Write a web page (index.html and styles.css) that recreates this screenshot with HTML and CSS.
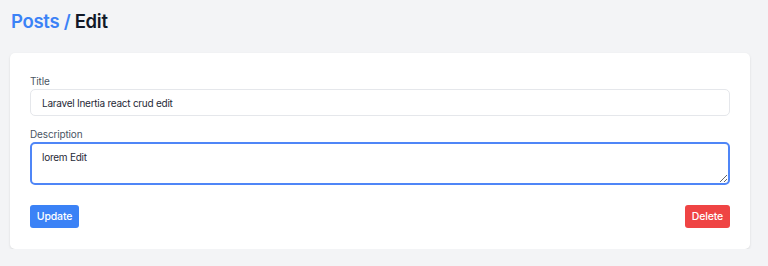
FILE: index.html
```html
<!DOCTYPE html>
<html lang="en">
<head>
<meta charset="utf-8">
<title>Posts / Edit</title>
<link rel="stylesheet" href="styles.css">
</head>
<body>
<h1 class="page-title"><span class="crumb">Posts</span> <span class="crumb">/</span> Edit</h1>
<div class="card">
  <form class="form">
    <div class="field">
      <label class="label" for="title">Title</label>
      <input class="input" id="title" type="text" value="Laravel Inertia react crud edit">
    </div>
    <div class="field">
      <label class="label" for="desc">Description</label>
      <textarea class="textarea focus" id="desc">lorem Edit</textarea>
    </div>
    <div class="actions">
      <button type="button" class="btn btn-blue">Update</button>
      <button type="button" class="btn btn-red">Delete</button>
    </div>
  </form>
</div>
</body>
</html>
```
FILE: styles.css
```css
* { box-sizing: border-box; }
html, body { margin: 0; padding: 0; }
body {
  background: #f3f4f6;
  font-family: Inter, "Noto Sans", sans-serif;
  color: #111827;
  padding: 0 18px 0 10px;
}
.page-title {
  margin: 0;
  padding: 9px 1px 0;
  height: 53px;
  font-size: 18.5px;
  font-weight: 600;
  letter-spacing: -0.3px;
  line-height: 24px;
  color: #111827;
}
.crumb { color: #3b82f6; }
.card {
  background: #fff;
  border-radius: 5px;
  box-shadow: 0 1px 3px rgba(0,0,0,0.08), 0 1px 2px rgba(0,0,0,0.04);
  padding: 20px 20px 21px;
  width: 740px;
}
.form { display: flex; flex-direction: column; }
.field { display: flex; flex-direction: column; margin-bottom: 10px; }
.label {
  font-size: 10px;
  letter-spacing: -0.15px;
  line-height: 16px;
  color: #4b5563;
}
.input, .textarea {
  font-family: inherit;
  font-size: 10px;
  letter-spacing: -0.25px;
  color: #1f2937;
  border: 1px solid #e5e7eb;
  border-radius: 5px;
  padding: 0 11px;
  width: 100%;
  background: #fff;
  outline: none;
}
.input { height: 27px; }
.textarea {
  height: 43px;
  line-height: 16px;
  resize: vertical;
}
.textarea.focus {
  border: 2px solid #4f86f7;
  padding: 5px 10px;
  border-radius: 5px;
}
.actions {
  display: flex;
  justify-content: space-between;
  margin-top: 10px;
}
.btn {
  font-family: inherit;
  font-size: 10.5px;
  letter-spacing: -0.15px;
  font-weight: 500;
  color: #fff;
  border: none;
  border-radius: 3px;
  height: 23px;
  padding: 0;
  cursor: pointer;
}
.btn-blue { background: #3b82f6; width: 49px; }
.btn-red { background: #ef4444; width: 45px; }
```
